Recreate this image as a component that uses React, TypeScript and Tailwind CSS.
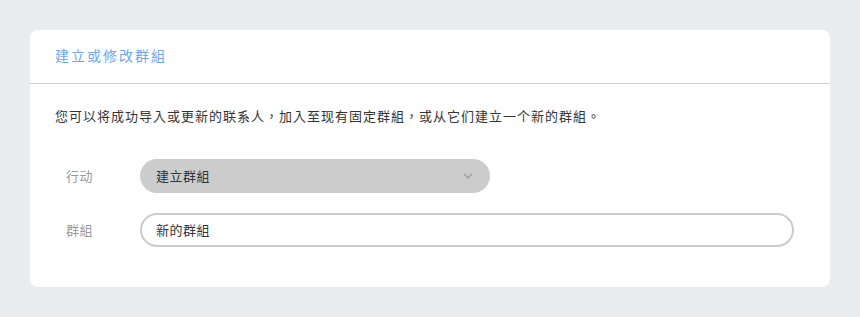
export default function App() {
  const font = { fontFamily: '"Noto Sans CJK TC", "Noto Sans", sans-serif' };
  return (
    <div className="w-[860px] h-[317px] bg-[#ebecee] pt-[30px] px-[30px]" style={font}>
      <div className="bg-white rounded-lg h-[257px]">
        {/* Header */}
        <div className="h-[54px] flex items-center px-[25px] border-b border-[#cfcfcf]">
          <h2 className="text-[14px] tracking-[2px] text-[#6fa5f3] font-normal -mt-[2px]">建立或修改群組</h2>
        </div>

        <div className="px-[25px] pt-[22px]">
          <p className="text-[13px] tracking-[1px] text-[#333]">
            您可以将成功导入或更新的联系人，加入至现有固定群組，或从它们建立一个新的群組。
          </p>

          <div className="mt-[33px] flex flex-col gap-[20px]">
            {/* Action row */}
            <div className="flex items-center">
              <span className="w-[85px] pl-[11px] text-[13px] tracking-[0.5px] text-[#999]">行动</span>
              <div className="w-[350px] h-[34px] rounded-full bg-[#cccccc] flex items-center justify-between pl-[16px] pr-[17px]">
                <span className="text-[13px] tracking-[0.5px] text-[#333]">建立群組</span>
                <svg width="10" height="6" viewBox="0 0 10 6" fill="none">
                  <path d="M1 1l4 4 4-4" stroke="#999" strokeWidth="1.2" />
                </svg>
              </div>
            </div>

            {/* Group row */}
            <div className="flex items-center">
              <span className="w-[85px] pl-[11px] text-[13px] tracking-[0.5px] text-[#999]">群組</span>
              <div className="w-[654px] h-[34px] rounded-full border-2 border-[#cccccc] flex items-center pl-[14px]">
                <span className="text-[13px] tracking-[0.5px] text-[#333]">新的群組</span>
              </div>
            </div>
          </div>
        </div>
      </div>
    </div>
  );
}
